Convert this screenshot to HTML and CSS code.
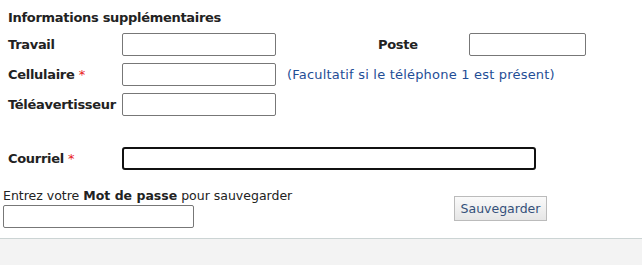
FILE: index.html
```html
<!DOCTYPE html>
<html lang="fr">
<head>
<meta charset="utf-8">
<title>Informations supplémentaires</title>
<link rel="stylesheet" href="styles.css">
</head>
<body>
<div class="info">
  <div class="heading">Informations supplémentaires</div>
  <div class="row">
    <label class="lbl">Travail</label>
    <input class="field" type="text">
    <label class="lbl poste">Poste</label>
    <input class="field small" type="text">
  </div>
  <div class="row">
    <label class="lbl">Cellulaire <span class="req">*</span></label>
    <input class="field" type="text">
    <span class="note">(Facultatif si le téléphone 1 est présent)</span>
  </div>
  <div class="row">
    <label class="lbl">Téléavertisseur</label>
    <input class="field" type="text">
  </div>
  <div class="row email">
    <label class="lbl">Courriel <span class="req">*</span></label>
    <input class="field wide" type="text">
  </div>
</div>
<div class="save">
  <div class="pw">
    <div class="pw-text">Entrez votre <b>Mot de passe</b> pour sauvegarder</div>
    <input class="field pwfield" type="password">
  </div>
  <button class="btn" type="button">Sauvegarder</button>
</div>
<div class="footer"></div>
</body>
</html>
```
FILE: styles.css
```css
html, body {
  margin: 0;
  padding: 0;
  background: #fff;
}
body {
  font-family: "DejaVu Sans", Verdana, sans-serif;
  font-size: 13px;
  color: #222;
  width: 642px;
  height: 265px;
  overflow: hidden;
}
.info {
  padding: 10px 0 0 8px;
}
.heading {
  font-weight: bold;
  letter-spacing: -0.3px;
  line-height: 16px;
  margin-bottom: 7px;
}
.row {
  display: flex;
  align-items: center;
  height: 23px;
  margin-bottom: 7px;
}
.lbl {
  width: 114px;
  font-weight: bold;
  letter-spacing: -0.3px;
  flex: none;
}
.req {
  color: #e8201c;
  font-weight: normal;
  letter-spacing: 0;
}
.field {
  box-sizing: border-box;
  width: 154px;
  height: 23px;
  border: 1px solid #777;
  border-radius: 2px;
  margin: 0;
  padding: 0 3px;
  font: inherit;
  background: #fff;
  flex: none;
}
.poste {
  margin-left: 102px;
  width: 91px;
}
.field.small {
  width: 117px;
}
.note {
  margin-left: 11px;
  color: #1f4e96;
  letter-spacing: 0.2px;
}
.row.email {
  margin-top: 31px;
}
.field.wide {
  width: 414px;
  border: 2px solid #111;
  border-radius: 3px;
}
.save {
  display: flex;
  align-items: flex-start;
  padding: 0 0 0 3px;
  height: 61px;
  box-sizing: border-box;
}
.pw {
  flex: none;
  width: 300px;
  margin-top: 11px;
}
.pw-text {
  font-size: 12.5px;
  line-height: 16px;
  color: #222;
  white-space: nowrap;
}
.pwfield {
  width: 191px;
  margin-top: 1px;
}
.btn {
  margin-left: 151px;
  margin-top: 19px;
  width: 93px;
  height: 25px;
  box-sizing: border-box;
  border: 1px solid #bbb;
  background: linear-gradient(#fafafa, #e6e6e6);
  color: #34507a;
  font-family: "DejaVu Sans", Verdana, sans-serif;
  font-size: 12.5px;
  padding: 0;
  border-radius: 0;
}
.footer {
  border-top: 1px solid #ccd4d4;
  background: #f3f3f3;
  height: 26px;
}
```
